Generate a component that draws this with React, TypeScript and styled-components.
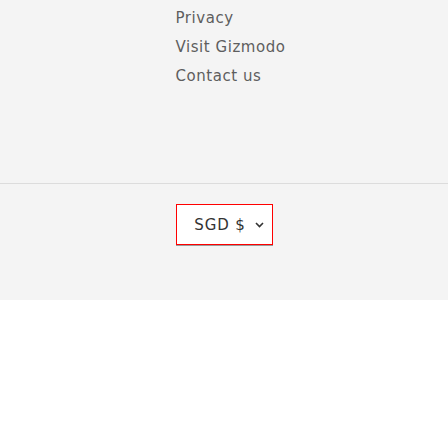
import React from "react";
import styled, { createGlobalStyle } from "styled-components";

const Global = createGlobalStyle`
  html, body { margin: 0; padding: 0; background: #ffffff; }
  body { font-family: "DejaVu Sans", "Open Sans", sans-serif; }
`;

const Footer = styled.footer`
  background: #f4f4f4;
  width: 448px;
`;

const LinksSection = styled.div`
  display: flex;
  justify-content: center;
  padding: 4px 0 0;
  height: 184px;
  box-sizing: border-box;
  border-bottom: 1px solid #dcdcdc;
`;

const LinkList = styled.ul`
  list-style: none;
  margin: 0;
  padding: 0;
  width: 97px;
  white-space: nowrap;
`;

const LinkItem = styled.li`
  font-size: 15px;
  letter-spacing: 0.55px;
  line-height: 29px;
  color: #5e5e5e;
`;

const BottomSection = styled.div`
  display: flex;
  justify-content: center;
  padding-top: 20px;
  height: 116px;
  box-sizing: border-box;
`;

const CurrencySelect = styled.div`
  width: 97px;
  height: 41px;
  box-sizing: border-box;
  background: #ffffff;
  border: 1px solid #ff0000;
  box-shadow: 0 1px 0 #9a9a9a;
  display: flex;
  align-items: center;
  justify-content: center;
  gap: 9px;
  font-size: 15px;
  letter-spacing: 0.9px;
  color: #333333;
  padding-left: 10px;
`;

const Chevron = styled.svg`
  width: 9px;
  height: 6px;
  margin-top: 1px;
`;

export default function App() {
  return (
    <>
      <Global />
      <Footer>
        <LinksSection>
          <LinkList>
            <LinkItem>Privacy</LinkItem>
            <LinkItem>Visit Gizmodo</LinkItem>
            <LinkItem>Contact us</LinkItem>
          </LinkList>
        </LinksSection>
        <BottomSection>
          <CurrencySelect>
            <span>SGD $</span>
            <Chevron viewBox="0 0 9 6">
              <path d="M1 1l3.5 3.5L8 1" fill="none" stroke="#333" strokeWidth="1.6" />
            </Chevron>
          </CurrencySelect>
        </BottomSection>
      </Footer>
    </>
  );
}
